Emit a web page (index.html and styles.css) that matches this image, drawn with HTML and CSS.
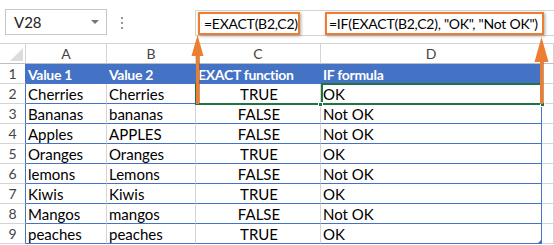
FILE: index.html
```html
<!DOCTYPE html>
<html lang="en">
<head>
    <meta charset="UTF-8">
    <title>EXACT function</title>
    <link rel="stylesheet" href="styles.css">
</head>
<body>
    <div class="sheet">
        <div class="toolbar">
            <div class="namebox">
                <span>V28</span>
                <i class="caret"></i>
            </div>
            <div class="grip"><i></i><i></i><i></i></div>
            <div class="formula">
                <span class="callout exact">=EXACT(B2,C2)</span>
                <span class="callout iff">=IF(EXACT(B2,C2), "OK", "Not OK")</span>
            </div>
        </div>

        <div class="grid-wrap">
            <div class="grid">
                <div class="corner"></div>
                <div class="col">A</div>
                <div class="col">B</div>
                <div class="col">C</div>
                <div class="col">D</div>
                <div class="col"></div>

                <div class="num">1</div>
                <div class="cell head">Value 1</div>
                <div class="cell head">Value 2</div>
                <div class="cell head">EXACT function</div>
                <div class="cell head last">IF formula</div>
                <div class="cell out"></div>

                <div class="num">2</div>
                <div class="cell">Cherries</div>
                <div class="cell">Cherries</div>
                <div class="cell mid">TRUE</div>
                <div class="cell last">OK</div>
                <div class="cell out"></div>

                <div class="num">3</div>
                <div class="cell">Bananas</div>
                <div class="cell">bananas</div>
                <div class="cell mid">FALSE</div>
                <div class="cell last">Not OK</div>
                <div class="cell out"></div>

                <div class="num">4</div>
                <div class="cell">Apples</div>
                <div class="cell">APPLES</div>
                <div class="cell mid">FALSE</div>
                <div class="cell last">Not OK</div>
                <div class="cell out"></div>

                <div class="num">5</div>
                <div class="cell">Oranges</div>
                <div class="cell">Oranges</div>
                <div class="cell mid">TRUE</div>
                <div class="cell last">OK</div>
                <div class="cell out"></div>

                <div class="num">6</div>
                <div class="cell">lemons</div>
                <div class="cell">Lemons</div>
                <div class="cell mid">FALSE</div>
                <div class="cell last">Not OK</div>
                <div class="cell out"></div>

                <div class="num">7</div>
                <div class="cell">Kiwis</div>
                <div class="cell">Kiwis</div>
                <div class="cell mid">TRUE</div>
                <div class="cell last">OK</div>
                <div class="cell out"></div>

                <div class="num">8</div>
                <div class="cell">Mangos</div>
                <div class="cell">mangos</div>
                <div class="cell mid">FALSE</div>
                <div class="cell last">Not OK</div>
                <div class="cell out"></div>

                <div class="num">9</div>
                <div class="cell">peaches</div>
                <div class="cell">peaches</div>
                <div class="cell mid">TRUE</div>
                <div class="cell last">OK</div>
                <div class="cell out"></div>
            </div>

            <!-- selected range C2:D2 -->
            <div class="selection">
                <i class="split"></i>
                <i class="handle h1"></i>
                <i class="handle h2"></i>
            </div>
            <i class="table-corner"></i>
        </div>

        <svg class="arrows" width="554" height="245" viewBox="0 0 554 245">
            <g fill="#ed7d31">
                <rect x="196" y="54" width="3" height="50" />
                <polygon points="197.5,35 191.5,56 203.5,56" />
                <rect x="540" y="60" width="3" height="44" />
                <polygon points="541.5,37 534.5,62 548.5,62" />
            </g>
            <g stroke="#9b5a2c" stroke-width="1" opacity="0.6">
                <line x1="199.5" y1="56" x2="199.5" y2="103" />
                <line x1="543.5" y1="62" x2="543.5" y2="103" />
            </g>
        </svg>
    </div>
</body>
</html>
```

FILE: styles.css
```css
* {
    margin: 0;
    padding: 0;
    box-sizing: border-box;
}

body {
    background: #fff;
    font-family: Lato, "Open Sans", sans-serif;
    color: #000;
}

.sheet {
    position: relative;
    width: 554px;
    height: 245px;
    overflow: hidden;
}

/* name box + formula bar */
.toolbar {
    display: flex;
    align-items: flex-start;
    height: 43px;
    padding-top: 9px;
}

.namebox {
    display: flex;
    align-items: center;
    justify-content: space-between;
    width: 102px;
    height: 26px;
    margin-left: 5px;
    padding: 0 7px 0 8px;
    border: 1px solid #c6c6c6;
    font-size: 15px;
    color: #222;
}

.caret {
    width: 0;
    height: 0;
    border-left: 4px solid transparent;
    border-right: 4px solid transparent;
    border-top: 4px solid #777;
}

.grip {
    display: flex;
    flex-direction: column;
    gap: 3px;
    width: 88px;
    padding: 8px 0 0 14px;
}

.grip i {
    width: 2px;
    height: 2px;
    background: #999;
}

.formula {
    display: flex;
    flex: 1;
    height: 26px;
    margin-top: 1px;
    padding: 1px 0 0 2px;
    border-top: 1px solid #d4d4d4;
    border-bottom: 1px solid #d4d4d4;
    border-left: 1px solid #d4d4d4;
    font-size: 14px;
    letter-spacing: -0.25px;
}

.callout {
    display: flex;
    align-items: center;
    height: 23px;
    padding-left: 4px;
    border: 2px solid #ed7d31;
    box-shadow: 1px 1px 3px rgba(0, 0, 0, 0.35);
    white-space: nowrap;
}

.callout.exact {
    width: 102px;
}

.callout.iff {
    width: 219px;
    margin-left: 25px;
    padding-left: 2px;
}

/* worksheet */
.grid-wrap {
    position: relative;
}

.grid {
    display: grid;
    grid-template-columns: 26px 81px 89px 125px 221px 1fr;
    grid-template-rows: 21px;
    grid-auto-rows: 20px;
    font-size: 15px;
}

.corner,
.col {
    border-top: 1px solid #d4d4d4;
    border-right: 1px solid #d4d4d4;
    border-bottom: 1px solid #bdbdbd;
}

.corner {
    position: relative;
}

.corner::after {
    content: "";
    position: absolute;
    right: 2px;
    bottom: 2px;
    border-left: 13px solid transparent;
    border-bottom: 13px solid #dcdcdc;
}

.col {
    text-align: center;
    line-height: 20px;
    font-size: 14px;
    color: #444;
}

.num {
    text-align: center;
    line-height: 20px;
    font-size: 14px;
    color: #444;
    border-right: 1px solid #4472c4;
    border-bottom: 1px solid #d4d4d4;
}

.cell {
    padding: 1px 0 0 2px;
    line-height: 19px;
    white-space: nowrap;
    border-right: 1px solid #d4d4d4;
    border-bottom: 1px solid #4472c4;
}

.cell.head {
    background: #4472c4;
    color: #fff;
    font-size: 14px;
    font-weight: 700;
    letter-spacing: -0.3px;
    border-right-color: #4472c4;
}

.cell.mid {
    text-align: center;
}

.cell.last {
    border-right-color: #4472c4;
}

.cell.out {
    border-bottom-color: #d4d4d4;
}

.selection {
    position: absolute;
    left: 195px;
    top: 40px;
    width: 348px;
    height: 22px;
    border: 2px solid #217346;
    border-top: 0;
}

.split {
    position: absolute;
    left: 124px;
    top: 0;
    width: 2px;
    height: 20px;
    background: #217346;
}

.split::after {
    content: "";
    position: absolute;
    left: 0;
    top: 0;
    width: 220px;
    height: 2px;
    background: #217346;
}

.handle {
    position: absolute;
    bottom: -4px;
    width: 5px;
    height: 5px;
    background: #217346;
    border: 1px solid #fff;
}

.h1 {
    left: 121px;
}

.h2 {
    right: -4px;
}

/* table resize mark */
.table-corner {
    position: absolute;
    left: 537px;
    top: 196px;
    border-left: 5px solid transparent;
    border-bottom: 5px solid #4472c4;
}

.arrows {
    position: absolute;
    left: 0;
    top: 0;
}
```
